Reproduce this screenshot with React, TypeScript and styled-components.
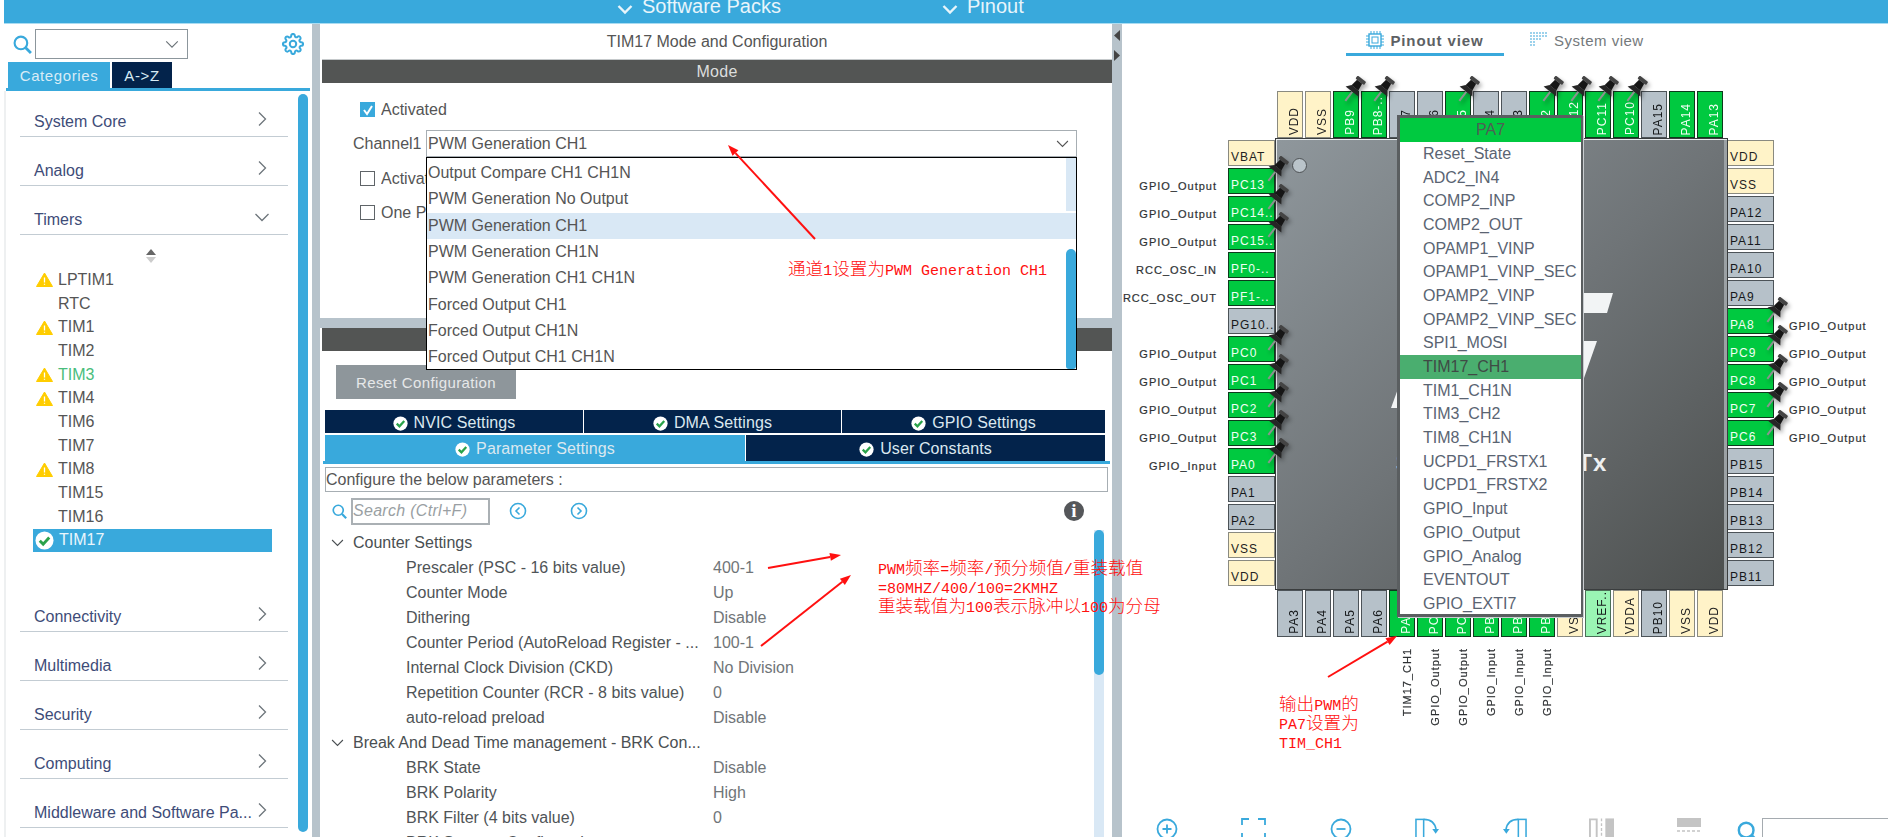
import React from "react";
import styled, { createGlobalStyle } from "styled-components";

const Blue = "#39a9dc";
const Navy = "#03234b";
const SANS = `"Liberation Sans", Arial, sans-serif`;
const NOTE = `"Noto Sans CJK SC", "Liberation Mono", monospace`;

const Global = createGlobalStyle`
  html, body { margin: 0; padding: 0; background: #fff; overflow: hidden; }
  * { box-sizing: border-box; }
`;

const Page = styled.div`
  position: relative; width: 1888px; height: 837px; overflow: hidden;
  padding-left: 4px; display: flex; flex-direction: column;
  font-family: ${SANS}; font-size: 16px; color: #555;
`;
const TopBar = styled.header`
  flex: none; height: 24px; background: ${Blue}; border-bottom: 1px solid #a9dcf2;
  display: flex; align-items: flex-end; padding-left: 612px; color: #e8f5fb; overflow: hidden;
`;
const TopItem = styled.div<{ $w: number }>`
  width: ${p => p.$w}px; height: 23px; flex: none; display: flex; align-items: flex-start; gap: 8px;
  font-size: 20px; line-height: 13px;
  & > svg { margin-top: 0; flex: none; }
`;
const Main = styled.div`flex: 1; min-height: 0; display: flex;`;

/* left */
const Left = styled.aside`width: 308px; flex: none; display: flex; flex-direction: column;`;
const SearchRow = styled.div`height: 38px; flex: none; display: flex; align-items: center; padding: 2px 8px 0 9px; gap: 3px;`;
const ComboBox = styled.div`
  width: 153px; height: 30px; border: 1px solid #8c969c; display: flex; align-items: center;
  justify-content: flex-end; padding-right: 7px; color: #6b7378;
`;
const Gear = styled.div`margin-left: auto; color: ${Blue}; display: flex;`;
const TabRow = styled.div`
  height: 29px; flex: none; margin-left: 2px; width: 304px; padding-left: 2px; display: flex; gap: 2px;
  border-bottom: 3px solid ${Blue};
`;
const SideTab = styled.div<{ $on?: boolean }>`
  width: ${p => (p.$on ? 102 : 60)}px; background: ${p => (p.$on ? Blue : Navy)}; color: #d8ecf6;
  display: flex; align-items: center; justify-content: center; font-size: 15px; letter-spacing: .6px;
`;
const LeftBody = styled.div`flex: 1; min-height: 0; display: flex; border-left: 2px solid #eef0f1; padding-top: 3px;`;
const CatList = styled.div`width: 292px; flex: none; padding: 19px 10px 0 14px; display: flex; flex-direction: column;`;
const Cat = styled.div`
  height: 24px; flex: none; margin-bottom: 25px; border-bottom: 1px solid #c3ccd3; display: flex; align-items: flex-start;
  justify-content: space-between; padding: 0 17px 0 14px; color: #3e4c78; font-size: 16px; line-height: 17px;
  & > svg { margin-top: -3px; color: #6d757b; flex: none; }
`;
const TimerList = styled.div`margin: -25px 0 25px 0; padding: 14px 0 31px 0; display: flex; flex-direction: column;`;
const SortMark = styled.div`height: 19px; padding-left: 125px; display: flex; align-items: flex-start;`;
const Timer = styled.div<{ $sel?: boolean; $tone?: string }>`
  width: 239px; height: 23.7px; flex: none; margin-left: 13px; display: flex; align-items: center; padding-left: 2px; gap: ${p => (p.$sel ? 5 : 4)}px;
  background: ${p => (p.$sel ? Blue : "transparent")};
  color: ${p => (p.$sel ? "#e9f6fc" : p.$tone || "#555")}; font-size: 16px;
`;
const IconSlot = styled.span`width: 19px; height: 18px; flex: none; display: flex; align-items: center; justify-content: center;`;
const LeftScroll = styled.div`width: 10px; flex: none; margin-bottom: 5px; background: ${Blue}; border-radius: 5px;`;
const Split = styled.div`width: 8px; flex: none; background: #b7c3cb;`;

/* center */
const Center = styled.section`width: 792px; flex: none; display: flex; flex-direction: column; padding-left: 2px;`;
const Title = styled.div`height: 36px; flex: none; display: flex; align-items: center; justify-content: center; font-size: 16px; border-bottom: 1px solid #c5c9cb;`;
const DarkBar = styled.div`height: 23px; flex: none; background: #535554; color: #dcdedd; display: flex; align-items: center; justify-content: center; font-size: 16px; letter-spacing: .3px;`;
const ModeBody = styled.div`position: relative; height: 235px; flex: none; padding: 19px 0 0 38px;`;
const CheckRow = styled.div`display: flex; align-items: center; gap: 6px; height: 15px; font-size: 16px; color: #555;`;
const CheckText = styled.span<{ $clip?: number }>`
  white-space: nowrap; overflow: hidden; ${p => (p.$clip ? `width: ${p.$clip}px;` : "")}
`;
const Check = styled.span<{ $on?: boolean }>`
  width: 15px; height: 15px; flex: none; border: 1px solid ${p => (p.$on ? Blue : "#5f6468")}; background: ${p => (p.$on ? Blue : "#fff")};
  display: flex; align-items: center; justify-content: center;
`;
const ChannelRow = styled.div`display: flex; align-items: center; height: 27px; margin: 13px 0 0 -7px; gap: 6px;`;
const ChannelLabel = styled.span`width: 67px; flex: none; white-space: nowrap;`;
const ChannelBox = styled.div`
  width: 651px; height: 27px; border: 1px solid #a7aeb3; display: flex; align-items: center; justify-content: space-between;
  padding: 0 6px 0 1px; color: #555;
`;
const CheckStack = styled.div`margin-top: 14px; display: flex; flex-direction: column; gap: 19px;`;
const Drop = styled.div`
  position: absolute; left: 104px; top: 74px; width: 651px; height: 213px; background: #fff; border: 1px solid #000;
  display: flex; z-index: 2;
`;
const DropList = styled.div`flex: 1; min-width: 0; padding-top: 2px; position: relative; z-index: 1;`;
const DropItem = styled.div<{ $on?: boolean }>`
  height: 26.3px; display: flex; align-items: center; padding-left: 1px; color: #555; font-size: 16px;
  background: ${p => (p.$on ? "#d9e8f5" : "transparent")};
  width: ${p => (p.$on ? "649px" : "auto")};
`;
const DropTrack = styled.div`width: 10px; flex: none; background: linear-gradient(#d9e8f5 0 53px, #fff 53px); display: flex; flex-direction: column; justify-content: flex-end;`;
const DropThumb = styled.div`height: 120px; background: ${Blue}; border-radius: 5px 5px 3px 3px;`;
const Gutter = styled.div`height: 10px; flex: none; background: #b7c3cb; margin-left: -2px;`;
const ResetBtn = styled.div`
  width: 180px; height: 34px; flex: none; margin: 14px 0 11px 14px; background: #8e969b; color: #e6e8e9;
  display: flex; align-items: center; justify-content: center; font-size: 15px; letter-spacing: .4px;
`;
const SetRow = styled.div<{ $h: number; $cols: string }>`
  margin-left: 3px; width: 780px; height: ${p => p.$h}px; flex: none; display: grid; grid-template-columns: ${p => p.$cols}; gap: 1px; background: #fff;
  margin-bottom: 2px;
`;
const SetTab = styled.div<{ $on?: boolean; $drop?: number }>`
  background: ${p => (p.$on ? Blue : Navy)}; color: #dbe8f0; display: flex; align-items: center; justify-content: center; gap: 6px; font-size: 16px;
  padding-top: ${p => p.$drop || 0}px; letter-spacing: .1px;
  & > svg { flex: none; }
`;
const TabLine = styled.div`height: 3px; width: 787px; margin: -2px 0 3px 1px; background: ${Blue}; flex: none;`;
const ConfigBox = styled.div`
  height: 25px; width: 783px; margin-left: 3px; flex: none; border: 1px solid #a7aeb3; display: flex; align-items: center; padding-left: 0; font-size: 16px; color: #555;
`;
const FindRow = styled.div`height: 38px; flex: none; display: flex; align-items: center; padding: 0 28px 0 10px;`;
const FindBox = styled.div`
  width: 139px; height: 27px; border: 2px solid #aab0b4; margin-left: 4px; display: flex; align-items: center; padding-left: 0; color: #9a9fa3; font-style: italic; font-size: 16px; letter-spacing: .3px; white-space: nowrap; overflow: hidden;
`;
const NavDot = styled.span<{ $m: number }>`margin-left: ${p => p.$m}px; display: flex; color: ${Blue};`;
const InfoDot = styled.span`
  margin-left: auto; width: 20px; height: 20px; border-radius: 50%; background: #55575a; color: #fff; font-family: "Liberation Serif", serif;
  font-weight: 700; font-size: 19px; display: flex; align-items: center; justify-content: center;
`;
const TreeWrap = styled.div`flex: 1; min-height: 0; display: flex; overflow: hidden;`;
const Tree = styled.div`width: 772px; flex: none; padding: 0 0 0 8px;`;
const TreeHead = styled.div`height: 25px; display: flex; align-items: center; gap: 8px; color: #4a4f52;`;
const TreeRow = styled.div`height: 25px; display: grid; grid-template-columns: 307px 1fr; padding-left: 76px; align-items: center; color: #555;`;
const RowName = styled.span`white-space: nowrap; color: #4f5457;`;
const RowVal = styled.span`color: #707578;`;
const TreeTrack = styled.div`width: 10px; flex: none; background: #d9e8f5;`;
const TreeThumb = styled.div`height: 145px; background: ${Blue}; border-radius: 5px;`;
const MidSplit = styled.div`width: 10px; flex: none; background: #b7c3cb; padding-top: 2px; display: flex; flex-direction: column; align-items: flex-start;`;

/* right */
const Right = styled.section`flex: 1; min-width: 0; display: flex; flex-direction: column; position: relative;`;
const ViewTabs = styled.div`height: 32px; flex: none; display: flex; padding-left: 224px; align-items: stretch;`;
const ViewTab = styled.div<{ $on?: boolean }>`
  width: ${p => (p.$on ? 158 : 140)}px; margin-right: ${p => (p.$on ? 26 : 0)}px; display: flex; align-items: center; justify-content: ${p => (p.$on ? "center" : "flex-start")}; gap: 6px; padding-top: 3px;
  color: ${p => (p.$on ? "#5d6164" : "#74797c")}; font-weight: ${p => (p.$on ? 700 : 400)}; font-size: 15px; letter-spacing: ${p => (p.$on ? .9 : .5)}px;
  border-bottom: 3px solid ${p => (p.$on ? Blue : "transparent")};
`;
const ChipGrid = styled.div`
  position: relative; margin-top: 35px; flex: none; display: grid; width: 766px;
  grid-template-columns: 153px 453px 160px; grid-template-rows: 47px 452px 47px auto;
`;
const HRow = styled.div<{ $row: number }>`grid-column: 2; grid-row: ${p => p.$row}; display: flex; gap: 2px; padding-left: 2px;`;
const VCol = styled.div<{ $col: number }>`grid-column: ${p => p.$col}; grid-row: 2; display: flex; flex-direction: column; gap: 2px; padding-top: 2px;`;
const PinLine = styled.div<{ $right?: boolean }>`display: flex; align-items: center; gap: ${p => (p.$right ? 15 : 11)}px; justify-content: ${p => (p.$right ? "flex-start" : "flex-end")};`;
const kinds: Record<string, [string, string, string]> = {
  g: ["#00c940", "#0d3a1c", "#f1fff4"],
  x: ["#b6c1c9", "#4c5358", "#15181a"],
  y: ["#fff3c8", "#8a8a80", "#222"],
  r: ["#9af5b4", "#4b6f57", "#15181a"],
};
const PinH = styled.div<{ $k: string; $shift?: boolean }>`
  width: 47px; height: 26px; flex: none; background: ${p => kinds[p.$k][0]}; border: 1px solid ${p => kinds[p.$k][1]}; color: ${p => kinds[p.$k][2]};
  display: flex; align-items: flex-end; padding: 0 0 1px 2px; font-size: 12px; line-height: 14px; letter-spacing: 1px; overflow: hidden; white-space: nowrap;
  margin-left: ${p => (p.$shift ? -1 : 0)}px;
`;
const PinV = styled.div<{ $k: string }>`
  width: 26px; height: 47px; flex: none; background: ${p => kinds[p.$k][0]}; border: 1px solid ${p => kinds[p.$k][1]}; color: ${p => kinds[p.$k][2]};
  display: flex; align-items: flex-end; justify-content: flex-end; padding: 0 1px 2px 0; font-size: 12px; line-height: 14px; letter-spacing: 1px; overflow: hidden; white-space: nowrap;
`;
const Vert = styled.span`writing-mode: vertical-rl; transform: rotate(180deg); display: block;`;
const SigLabel = styled.span`font-size: 11px; letter-spacing: 1px; color: #2e3133; white-space: nowrap; -webkit-text-stroke: .2px #2e3133;`;
const SideLabel = styled(SigLabel)`padding-top: 9px;`;
const ChipBody = styled.div`
  grid-column: 2; grid-row: 2; position: relative; background: linear-gradient(135deg, #8f979c 0%, #6f7477 50%, #4c4f4e 100%);
  border: 1px solid #3a3d3e; box-shadow: inset 1px 1px 0 #e8ecee, inset -3px 0 0 #9ba1a4;
  display: flex; justify-content: center; padding-top: 310px; color: #eef0f1; font-weight: 700; font-size: 24px; line-height: 28px; letter-spacing: 1px;
`;
const ChipDot = styled.span`position: absolute; left: 16px; top: 19px; width: 15px; height: 15px; border-radius: 50%; background: #bac4ca; border: 1px solid #4d5154;`;
const Logo = styled.svg`position: absolute; left: 0; top: 0;`;
const BottomLabels = styled.div`grid-column: 2; grid-row: 4; display: flex; gap: 2px; padding: 11px 0 0 114px;`;
const BottomSlot = styled.div`width: 26px; flex: none; display: flex; justify-content: flex-end; padding-right: 2px;`;
const Popup = styled.div`
  position: absolute; left: 275px; top: 24px; width: 186px; height: 502px; background: #fff; border: 3px solid #5a5e60; border-right-width: 2px;
  overflow: hidden; z-index: 3; display: flex; flex-direction: column; box-shadow: 1px 1px 0 #c8cccf;
`;
const PopHead = styled.div`height: 24px; flex: none; background: #00c940; color: #4f5f55; display: flex; align-items: center; justify-content: center; font-size: 16px;`;
const PopItem = styled.div<{ $on?: boolean }>`
  height: 23.7px; flex: none; display: flex; align-items: center; padding-left: 23px; font-size: 16px; color: #5a6472; white-space: nowrap;
  background: ${p => (p.$on ? "#4aae6f" : "transparent")}; ${p => (p.$on ? "color:#3f4a45;" : "")}
`;
const PinIcon = styled.svg`position: absolute; z-index: 2; filter: drop-shadow(2px 3px 2px rgba(0,0,0,.35));`;
const Tools = styled.div`
  margin-top: auto; height: 19px; flex: none; display: flex; gap: 62px; padding-left: 32px; align-items: flex-start; overflow: hidden;
`;
const Tool = styled.span<{ $tone?: string }>`width: 25px; height: 19px; flex: none; display: flex; justify-content: center; color: ${p => p.$tone || Blue};`;
const ToolBox = styled.div`position: absolute; left: 640px; bottom: -4px; width: 130px; height: 23px; border: 1px solid #a5abb0; background: #fff;`;
const ToolSearch = styled.span`position: absolute; left: 615px; top: 797px; color: ${Blue};`;

/* annotations */
const Notes = styled.svg`position: absolute; left: 0; top: 0; z-index: 5; pointer-events: none;`;
const Note = styled.div<{ $x: number; $y: number }>`
  position: absolute; left: ${p => p.$x}px; top: ${p => p.$y}px; z-index: 6; color: #ff1010; font-family: ${NOTE}; font-size: 17.6px; font-weight: 300; line-height: 19px; white-space: pre;
`;
const NoteAscii = styled.span`font-family: "Liberation Mono", monospace; font-size: 15px; font-weight: 400; line-height: 0;`;

const NoteText = ({ text }: { text: string }) => (
  <>
    {text.split(/([\x21-\x7e ]+)/).map((part, i) =>
      /^[\x21-\x7e ]+$/.test(part) ? <NoteAscii key={i}>{part}</NoteAscii> : part
    )}
  </>
);

const Chev = ({ open, size = 18, w = 1.3 }: { open?: boolean; size?: number; w?: number }) => (
  <svg width={size} height={size} viewBox="0 0 18 18" fill="none" stroke="currentColor" strokeWidth={w}>
    {open ? <path d="M2.5 6l6.5 6.5L15.5 6" /> : <path d="M6 2.5L12.5 9 6 15.5" />}
  </svg>
);
const Warn = () => (
  <svg width="17" height="15" viewBox="0 0 17 15">
    <path d="M8.5 1L16.5 14.5H.5z" fill="#ffcd00" stroke="#ffcd00" strokeLinejoin="round" />
    <path d="M8.5 5.5v5M8.5 11.8v1" stroke="#fff" strokeWidth="1.3" />
  </svg>
);
const Ok = ({ size = 15, bg = "#fff" }: { size?: number; bg?: string }) => (
  <svg width={size} height={size} viewBox="0 0 20 20" style={{ flex: "none" }}>
    <circle cx="10" cy="10" r="9.5" fill={bg} />
    <path d="M5 10.2l3.6 3.6L15 6.8" fill="none" stroke="#2aa24a" strokeWidth="3" />
  </svg>
);
const Find = ({ size = 18 }: { size?: number }) => (
  <svg width={size} height={size} viewBox="0 0 18 18" fill="none" stroke={Blue} strokeWidth="2">
    <circle cx="7.5" cy="7.5" r="6" /><path d="M12 12l5 5" strokeWidth="2.6" />
  </svg>
);
const Pushpin = ({ x, y }: { x: number; y: number }) => (
  <PinIcon width="26" height="26" viewBox="0 0 24 24" style={{ left: x - 13, top: y - 13 }}>
    <path d="M4 23L10.5 14.5" stroke="#8d9190" strokeWidth="1.8" />
    <g transform="rotate(38 12 12)">
      <rect x="7" y="0" width="10" height="3.6" rx="1.2" fill="#444" />
      <path d="M9 3.6h6l1 7H8z" fill="#161616" />
      <path d="M4.5 15L8 10.5h8l3.5 4.5z" fill="#262626" />
    </g>
  </PinIcon>
);

const cats1 = ["System Core", "Analog"];
const cats2 = ["Connectivity", "Multimedia", "Security", "Computing", "Middleware and Software Pa..."];
const timers: [string, boolean, string?][] = [
  ["LPTIM1", true], ["RTC", false], ["TIM1", true], ["TIM2", false], ["TIM3", true, "#49bd7c"], ["TIM4", true],
  ["TIM6", false], ["TIM7", false], ["TIM8", true], ["TIM15", false], ["TIM16", false],
];
const dropItems = ["Output Compare CH1 CH1N", "PWM Generation No Output", "PWM Generation CH1", "PWM Generation CH1N", "PWM Generation CH1 CH1N", "Forced Output CH1", "Forced Output CH1N", "Forced Output CH1 CH1N"];
const rows1: [string, string][] = [
  ["Prescaler (PSC - 16 bits value)", "400-1"], ["Counter Mode", "Up"], ["Dithering", "Disable"],
  ["Counter Period (AutoReload Register - ...", "100-1"], ["Internal Clock Division (CKD)", "No Division"],
  ["Repetition Counter (RCR - 8 bits value)", "0"], ["auto-reload preload", "Disable"],
];
const rows2: [string, string][] = [["BRK State", "Disable"], ["BRK Polarity", "High"], ["BRK Filter (4 bits value)", "0"], ["BRK Sources Configuration", ""]];

const topPins: [string, string][] = [["VDD", "y"], ["VSS", "y"], ["PB9", "g"], ["PB8-..", "g"], ["PB7", "x"], ["PB6", "x"], ["PB5", "g"], ["PB4", "x"], ["PB3", "x"], ["PD2", "g"], ["PC12", "g"], ["PC11", "g"], ["PC10", "g"], ["PA15", "x"], ["PA14", "g"], ["PA13", "g"]];
const leftPins: [string, string, string][] = [["VBAT", "y", ""], ["PC13", "g", "GPIO_Output"], ["PC14..", "g", "GPIO_Output"], ["PC15..", "g", "GPIO_Output"], ["PF0-..", "g", "RCC_OSC_IN"], ["PF1-..", "g", "RCC_OSC_OUT"], ["PG10..", "x", ""], ["PC0", "g", "GPIO_Output"], ["PC1", "g", "GPIO_Output"], ["PC2", "g", "GPIO_Output"], ["PC3", "g", "GPIO_Output"], ["PA0", "g", "GPIO_Input"], ["PA1", "x", ""], ["PA2", "x", ""], ["VSS", "y", ""], ["VDD", "y", ""]];
const rightPins: [string, string, string][] = [["VDD", "y", ""], ["VSS", "y", ""], ["PA12", "x", ""], ["PA11", "x", ""], ["PA10", "x", ""], ["PA9", "x", ""], ["PA8", "g", "GPIO_Output"], ["PC9", "g", "GPIO_Output"], ["PC8", "g", "GPIO_Output"], ["PC7", "g", "GPIO_Output"], ["PC6", "g", "GPIO_Output"], ["PB15", "x", ""], ["PB14", "x", ""], ["PB13", "x", ""], ["PB12", "x", ""], ["PB11", "x", ""]];
const bottomPins: [string, string][] = [["PA3", "x"], ["PA4", "x"], ["PA5", "x"], ["PA6", "x"], ["PA7", "g"], ["PC4", "g"], ["PC5", "g"], ["PB0", "g"], ["PB1", "g"], ["PB2", "g"], ["VSSA", "y"], ["VREF..", "r"], ["VDDA", "y"], ["PB10", "x"], ["VSS", "y"], ["VDD", "y"]];
const bottomLabels = ["TIM17_CH1", "GPIO_Output", "GPIO_Output", "GPIO_Input", "GPIO_Input", "GPIO_Input"];
const popItems = ["Reset_State", "ADC2_IN4", "COMP2_INP", "COMP2_OUT", "OPAMP1_VINP", "OPAMP1_VINP_SEC", "OPAMP2_VINP", "OPAMP2_VINP_SEC", "SPI1_MOSI", "TIM17_CH1", "TIM1_CH1N", "TIM3_CH2", "TIM8_CH1N", "UCPD1_FRSTX1", "UCPD1_FRSTX2", "GPIO_Input", "GPIO_Output", "GPIO_Analog", "EVENTOUT", "GPIO_EXTI7"];

const gx = (x: number) => x - 1122;
const gy = (y: number) => y - 91;
const pins: [number, number][] = [
  [1354, 89], [1383, 89], [1468, 89], [1552, 89], [1580, 89], [1607, 89], [1636, 89],
  [1277, 169], [1277, 197], [1277, 225], [1277, 338], [1277, 367], [1277, 395], [1277, 423], [1277, 451],
  [1776, 310], [1776, 338], [1776, 367], [1776, 395], [1776, 423],
];

const arrows: [number, number, number, number][] = [
  [815, 239, 728, 145], [768, 568, 841, 555], [761, 646, 851, 575], [1328, 677, 1397, 636],
];

export default function App() {
  return (
    <Page>
      <Global />
      <TopBar>
        <TopItem $w={325}><Chev open size={18} w={2.4} />Software Packs</TopItem>
        <TopItem $w={120}><Chev open size={18} w={2.4} />Pinout</TopItem>
      </TopBar>
      <Main>
        <Left>
          <SearchRow>
            <Find size={19} />
            <ComboBox><Chev open size={16} /></ComboBox>
            <Gear>
              <svg width="22" height="22" viewBox="0 0 24 24" fill="none" stroke="currentColor" strokeWidth="2.2">
                <circle cx="12" cy="12" r="3.5" />
                <path d="M19.4 15a1.65 1.65 0 0 0 .33 1.82l.06.06a2 2 0 1 1-2.83 2.83l-.06-.06a1.65 1.65 0 0 0-2.82 1.17V21a2 2 0 1 1-4 0v-.09A1.65 1.65 0 0 0 7.2 19.7l-.06.06a2 2 0 1 1-2.83-2.83l.06-.06A1.65 1.65 0 0 0 3.2 14H3a2 2 0 1 1 0-4h.09A1.65 1.65 0 0 0 4.3 7.2l-.06-.06a2 2 0 1 1 2.83-2.83l.06.06A1.65 1.65 0 0 0 10 3.2V3a2 2 0 1 1 4 0v.09a1.65 1.65 0 0 0 2.8 1.17l.06-.06a2 2 0 1 1 2.83 2.83l-.06.06A1.65 1.65 0 0 0 20.8 10H21a2 2 0 1 1 0 4h-.09a1.65 1.65 0 0 0-1.51 1z" />
              </svg>
            </Gear>
          </SearchRow>
          <TabRow><SideTab $on>Categories</SideTab><SideTab>A-&gt;Z</SideTab></TabRow>
          <LeftBody>
            <CatList>
              {cats1.map(c => <Cat key={c}>{c}<Chev /></Cat>)}
              <Cat>Timers<Chev open /></Cat>
              <TimerList>
                <SortMark>
                  <svg width="12" height="14" viewBox="0 0 12 14"><path d="M6 0l5 6H1z" fill="#666" /><path d="M6 14L1 8h10z" fill="#ccc" /></svg>
                </SortMark>
                {timers.map(([n, w, tone]) => (
                  <Timer key={n} $tone={tone}><IconSlot>{w && <Warn />}</IconSlot>{n}</Timer>
                ))}
                <Timer $sel><IconSlot><Ok size={19} /></IconSlot>TIM17</Timer>
              </TimerList>
              {cats2.map(c => <Cat key={c}>{c}<Chev /></Cat>)}
            </CatList>
            <LeftScroll />
          </LeftBody>
        </Left>
        <Split />
        <Center>
          <Title>TIM17 Mode and Configuration</Title>
          <DarkBar>Mode</DarkBar>
          <ModeBody>
            <CheckRow>
              <Check $on><svg width="12" height="12" viewBox="0 0 12 12"><path d="M2 6l3 4 5-8" fill="none" stroke="#fff" strokeWidth="2" /></svg></Check>
              <CheckText>Activated</CheckText>
            </CheckRow>
            <ChannelRow>
              <ChannelLabel>Channel1</ChannelLabel>
              <ChannelBox>PWM Generation CH1<Chev open size={15} /></ChannelBox>
            </ChannelRow>
            <CheckStack>
              <CheckRow><Check /><CheckText $clip={45}>Activated</CheckText></CheckRow>
              <CheckRow><Check /><CheckText $clip={45}>One Pulse Mode</CheckText></CheckRow>
            </CheckStack>
            <Drop>
              <DropList>
                {dropItems.map((d, i) => <DropItem key={d} $on={i === 2}>{d}</DropItem>)}
              </DropList>
              <DropTrack><DropThumb /></DropTrack>
            </Drop>
          </ModeBody>
          <Gutter />
          <DarkBar />
          <ResetBtn>Reset Configuration</ResetBtn>
          <SetRow $h={23} $cols="258px 257px 1fr">
            <SetTab $drop={3}><Ok />NVIC Settings</SetTab>
            <SetTab $drop={3}><Ok />DMA Settings</SetTab>
            <SetTab $drop={3}><Ok />GPIO Settings</SetTab>
          </SetRow>
          <SetRow $h={26} $cols="420px 1fr">
            <SetTab $on $drop={2}><Ok />Parameter Settings</SetTab>
            <SetTab $drop={2}><Ok />User Constants</SetTab>
          </SetRow>
          <TabLine />
          <ConfigBox>Configure the below parameters :</ConfigBox>
          <FindRow>
            <Find size={15} />
            <FindBox>Search (Ctrl+F)</FindBox>
            <NavDot $m={19}><svg width="18" height="18" viewBox="0 0 18 18" fill="none" stroke="currentColor" strokeWidth="1.6"><circle cx="9" cy="9" r="7.5" /><path d="M10.5 5.5L7 9l3.5 3.5" /></svg></NavDot>
            <NavDot $m={43}><svg width="18" height="18" viewBox="0 0 18 18" fill="none" stroke="currentColor" strokeWidth="1.6"><circle cx="9" cy="9" r="7.5" /><path d="M7.5 5.5L11 9l-3.5 3.5" /></svg></NavDot>
            <InfoDot>i</InfoDot>
          </FindRow>
          <TreeWrap>
            <Tree>
              <TreeHead><Chev open size={15} />Counter Settings</TreeHead>
              {rows1.map(([a, b]) => <TreeRow key={a}><RowName>{a}</RowName><RowVal>{b}</RowVal></TreeRow>)}
              <TreeHead><Chev open size={15} />Break And Dead Time management - BRK Con...</TreeHead>
              {rows2.map(([a, b]) => <TreeRow key={a}><RowName>{a}</RowName><RowVal>{b}</RowVal></TreeRow>)}
            </Tree>
            <TreeTrack><TreeThumb /></TreeTrack>
          </TreeWrap>
        </Center>
        <MidSplit>
          <svg width="10" height="46" viewBox="0 0 10 46"><path d="M8 4L2 9.5 8 15z" fill="#444" /><path d="M2 24l6 5.5-6 5.5z" fill="#444" /></svg>
        </MidSplit>
        <Right>
          <ViewTabs>
            <ViewTab $on>
              <svg width="18" height="18" viewBox="0 0 18 18" fill="none" stroke={Blue} strokeWidth="1"><rect x="3" y="3" width="12" height="12" strokeWidth="1.4" /><rect x="6" y="6" width="6" height="6" /><path d="M5 0v3M8 0v3M11 0v3M14 0v3M5 15v3M8 15v3M11 15v3M14 15v3M0 5h3M0 8h3M0 11h3M0 14h3M15 5h3M15 8h3M15 11h3M15 14h3" /></svg>
              Pinout view
            </ViewTab>
            <ViewTab>
              <svg width="18" height="16" viewBox="0 0 18 16" stroke="#7cc4e6" strokeWidth="1.4" strokeDasharray="2 1"><path d="M0 1h5M6 1h5M12 1h5M0 4h5M6 4h5M12 4h5M0 7h5M6 7h5M0 10h5M0 13h5" /></svg>
              System view
            </ViewTab>
          </ViewTabs>
          <ChipGrid>
            <HRow $row={1}>{topPins.map(([t, k], i) => <PinV key={i} $k={k}><Vert>{t}</Vert></PinV>)}</HRow>
            <VCol $col={1}>
              {leftPins.map(([t, k, l], i) => (
                <PinLine key={i}>{l && <SideLabel>{l}</SideLabel>}<PinH $k={k}>{t}</PinH></PinLine>
              ))}
            </VCol>
            <ChipBody>
              <Logo width="453" height="452" viewBox="0 0 453 452">
                <g fill="#f2f4f5" transform="translate(-1275 -138)">
                  <path d="M1398 385v22h-8z" />
                  <path d="M1570 292h42l-6 20h-36z" />
                  <path d="M1570 340h26l-13 37h-13z" />
                </g>
              </Logo>
              <ChipDot />
              STM32G431RBTx
            </ChipBody>
            <VCol $col={3}>
              {rightPins.map(([t, k, l], i) => (
                <PinLine $right key={i}><PinH $k={k} $shift>{t}</PinH>{l && <SideLabel>{l}</SideLabel>}</PinLine>
              ))}
            </VCol>
            <HRow $row={3}>{bottomPins.map(([t, k], i) => <PinV key={i} $k={k}><Vert>{t}</Vert></PinV>)}</HRow>
            <BottomLabels>
              {bottomLabels.map((l, i) => <BottomSlot key={i}><SigLabel><Vert>{l}</Vert></SigLabel></BottomSlot>)}
            </BottomLabels>
            {pins.map(([x, y]) => <Pushpin key={`${x}-${y}`} x={gx(x)} y={gy(y)} />)}
            <Popup>
              <PopHead>PA7</PopHead>
              {popItems.map(p => <PopItem key={p} $on={p === "TIM17_CH1"}>{p}</PopItem>)}
            </Popup>
          </ChipGrid>
          <Tools>
            <Tool><svg width="22" height="22" viewBox="0 0 22 22" fill="none" stroke="currentColor" strokeWidth="1.8"><circle cx="11" cy="11" r="9.5" /><path d="M11 6.5v9M6.5 11h9" /></svg></Tool>
            <Tool><svg width="25" height="22" viewBox="0 0 25 22" fill="none" stroke="currentColor" strokeWidth="1.8"><path d="M1 7V1h7M17 1h7v6M1 15v6h7M17 21h7v-6" /></svg></Tool>
            <Tool><svg width="22" height="22" viewBox="0 0 22 22" fill="none" stroke="currentColor" strokeWidth="1.8"><circle cx="11" cy="11" r="9.5" /><path d="M6.5 11h9" /></svg></Tool>
            <Tool><svg width="26" height="22" viewBox="0 0 26 22" fill="none" stroke="currentColor" strokeWidth="1.6"><rect x="1" y="1" width="8" height="20" /><path d="M9 1c8 0 12 4 13 11" /><path d="M18 11h7l-3.5 5z" fill="currentColor" stroke="none" /></svg></Tool>
            <Tool><svg width="26" height="22" viewBox="0 0 26 22" fill="none" stroke="currentColor" strokeWidth="1.6"><rect x="17" y="1" width="8" height="20" /><path d="M17 1C9 1 5 5 4 12" /><path d="M1 11h7l-3.5 5z" fill="currentColor" stroke="none" /></svg></Tool>
            <Tool $tone="#c4c4c4"><svg width="26" height="22" viewBox="0 0 26 22" fill="currentColor"><path d="M0 0h9v22H0z M2 2v18h5V2z" fillRule="evenodd" /><path d="M17 0h9v22h-9z" /><path d="M13 0v22" stroke="currentColor" strokeWidth="1.4" strokeDasharray="3 2" /></svg></Tool>
            <Tool $tone="#c4c4c4"><svg width="24" height="22" viewBox="0 0 24 22" fill="currentColor"><path d="M0 0h24v9H0z" /><path d="M0 13h24" stroke="currentColor" strokeWidth="1.4" strokeDasharray="3 2" /></svg></Tool>
          </Tools>
          <ToolSearch><Find size={22} /></ToolSearch>
          <ToolBox />
        </Right>
      </Main>
      <Notes width="1888" height="837" viewBox="0 0 1888 837">
        {arrows.map(([x1, y1, x2, y2]) => {
          const a = Math.atan2(y2 - y1, x2 - x1);
          const l = 11, s = 4;
          const bx = x2 - l * Math.cos(a), by = y2 - l * Math.sin(a);
          const nx = -Math.sin(a) * s, ny = Math.cos(a) * s;
          return (
            <g key={x1}>
              <line x1={x1} y1={y1} x2={bx} y2={by} stroke="#ff1010" strokeWidth="2" />
              <polygon points={`${x2},${y2} ${bx + nx},${by + ny} ${bx - nx},${by - ny}`} fill="#ff1010" />
            </g>
          );
        })}
      </Notes>
      <Note $x={788} $y={258}><NoteText text="通道1设置为PWM Generation CH1" /></Note>
      <Note $x={878} $y={557}><NoteText text={"PWM频率=频率/预分频值/重装载值\n=80MHZ/400/100=2KMHZ\n重装载值为100表示脉冲以100为分母"} /></Note>
      <Note $x={1279} $y={693}><NoteText text={"输出PWM的\nPA7设置为\nTIM_CH1"} /></Note>
    </Page>
  );
}
